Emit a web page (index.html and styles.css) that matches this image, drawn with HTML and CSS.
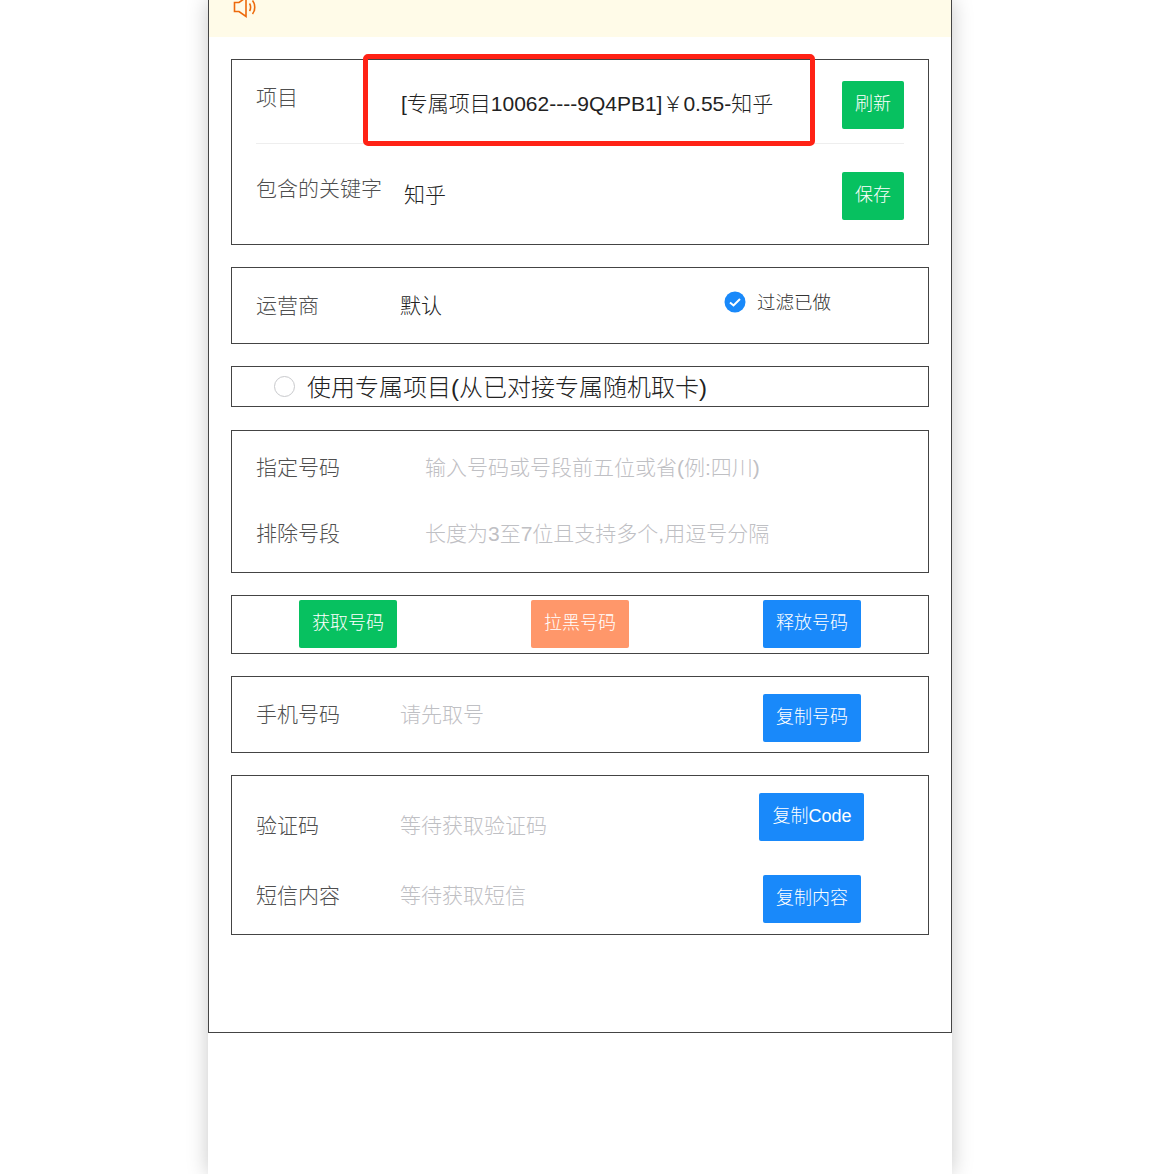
FILE: index.html
```html
<!DOCTYPE html>
<html>
<head>
	<meta charset="utf-8"/>
	<title>取号</title>
	<link rel="stylesheet" href="styles.css">
</head>
<body>
	<div id="phone">
		<div id="frame">
			<div id="notice">
				<svg class="speaker" width="24" height="24" viewBox="0 0 24 24" fill="none" stroke="#ed6a0c" stroke-width="1.6">
					<path d="M1.5 7.5H6L13 2.5V21.500L6 16.500H1.500Z"/>
					<path d="M16.500 8.500C18 10.500 18 14 16.500 16"/>
					<path d="M19.500 5.500C22.500 9 22.500 15.500 19.500 19"/>
				</svg>
			</div>

			<div class="card" id="project">
				<div class="row first">
					<span class="label">项目</span>
					<span class="value">[专属项目10062----9Q4PB1]￥0.55-知乎</span>
					<div class="button green small">刷新</div>
				</div>
				<div class="row second">
					<span class="label">包含的关键字</span>
					<span class="value keyword">知乎</span>
					<div class="button green small">保存</div>
				</div>
				<div id="mark"></div>
			</div>

			<div class="card" id="carrier">
				<span class="label">运营商</span>
				<span class="value">默认</span>
				<div class="check">
					<svg width="22" height="22" viewBox="0 0 22 22">
						<circle cx="11" cy="11" r="10.500" fill="#1989fa"/>
						<path d="M6 11.500L9.500 14.500L16 8" fill="none" stroke="#fff" stroke-width="2"/>
					</svg>
					<span>过滤已做</span>
				</div>
			</div>

			<div class="card" id="exclusive">
				<i class="radio"></i>
				<span class="title">使用专属项目(从已对接专属随机取卡)</span>
			</div>

			<div class="card" id="numbers">
				<div class="line">
					<span class="label">指定号码</span>
					<span class="hint">输入号码或号段前五位或省(例:四川)</span>
				</div>
				<div class="line">
					<span class="label">排除号段</span>
					<span class="hint">长度为3至7位且支持多个,用逗号分隔</span>
				</div>
			</div>

			<div class="card" id="actions">
				<div class="button green">获取号码</div>
				<div class="button orange">拉黑号码</div>
				<div class="button blue">释放号码</div>
			</div>

			<div class="card" id="mobile">
				<span class="label">手机号码</span>
				<span class="hint">请先取号</span>
				<div class="slot"><div class="button blue">复制号码</div></div>
			</div>

			<div class="card" id="sms">
				<div class="line code">
					<span class="label">验证码</span>
					<span class="hint">等待获取验证码</span>
					<div class="slot"><div class="button blue">复制Code</div></div>
				</div>
				<div class="line content">
					<span class="label">短信内容</span>
					<span class="hint">等待获取短信</span>
					<div class="slot"><div class="button blue">复制内容</div></div>
				</div>
			</div>
		</div>
	</div>
</body>
</html>
```

FILE: styles.css
```css
html,body{
	margin:0;
	padding:0;
	background:#fff;
}
body{
	font-family:"Liberation Sans","Noto Sans CJK SC",sans-serif;
	font-size:21px;
	font-weight:300;
	color:#222;
	overflow:hidden;
}
#phone{
	width:744px;
	height:1174px;
	margin-left:208px;
	box-shadow:0 0 20px rgba(0,0,0,0.22);
	background:#fff;
}
#frame{
	box-sizing:border-box;
	height:1033px;
	border:1px solid #444;
	border-top:none;
}
#notice{
	height:37px;
	background:#fffbe8;
	overflow:hidden;
	position:relative;
}
.speaker{
	position:absolute;
	left:24px;
	top:-5px;
}
.card{
	box-sizing:border-box;
	width:698px;
	margin:22px 0 0 22px;
	border:1px solid #444;
	position:relative;
}
.label{
	width:145px;
	flex:none;
	color:#4f4f4f;
	line-height:30px;
	white-space:nowrap;
}
.value{
	flex:1;
	line-height:30px;
	white-space:nowrap;
}
.hint{
	flex:1;
	color:#bfc0c4;
	line-height:30px;
	white-space:nowrap;
}
.button{
	box-sizing:border-box;
	height:48px;
	line-height:47px;
	padding:0 13px;
	flex:none;
	border-radius:2px;
	color:#fff;
	font-size:18px;
	white-space:nowrap;
}
.green{
	background:#07c160;
}
.orange{
	background:#ff976a;
}
.blue{
	background:#1989fa;
}
.slot{
	width:232px;
	flex:none;
	display:flex;
	justify-content:center;
	margin-right:-24px;
}

#project{
	height:186px;
	padding:0 24px;
}
.row{
	display:flex;
	align-items:flex-start;
}
.row.first{
	height:84px;
	box-sizing:border-box;
	padding-top:21px;
	border-bottom:1px solid #eee;
}
.row.first .label{
	margin-top:2px;
}
.row.first .value{
	margin-top:8px;
}
.row.second{
	height:100px;
	box-sizing:border-box;
	padding-top:28px;
}
.row.second .label{
	margin-top:2px;
}
.row.second .value{
	margin-top:8px;
}
.keyword{
	padding-left:3px;
}
#mark{
	position:absolute;
	left:131px;
	top:-6px;
	box-sizing:border-box;
	width:452px;
	height:92px;
	border:5px solid #ff2215;
	border-radius:5px;
}

#carrier{
	height:77px;
	padding:0 24px;
	display:flex;
	align-items:center;
}
#carrier .value{
	margin-left:-1px;
}
.check{
	position:absolute;
	left:492px;
	top:21px;
	display:flex;
	align-items:center;
	gap:11px;
	font-size:18.500px;
	color:#333;
}
.check svg{
	display:block;
}
.check span{
	margin-top:-1px;
}

#exclusive{
	height:41px;
	padding-left:42px;
	display:flex;
	align-items:center;
	gap:12px;
	font-size:24px;
}
.title{
	margin-top:-2px;
}
.radio{
	box-sizing:border-box;
	width:21px;
	height:21px;
	border:1px solid #c8c9cc;
	border-radius:50%;
}

#numbers{
	height:143px;
	margin-top:23px;
	padding:22px 24px 0;
}
#numbers .line{
	display:flex;
	height:66px;
}
#numbers .label{
	width:169px;
}

#actions{
	height:59px;
	padding-top:4px;
	display:flex;
	justify-content:space-around;
	align-items:flex-start;
}

#mobile{
	height:77px;
	padding:0 24px;
	display:flex;
	align-items:center;
}
#mobile .label{
	width:144px;
}
#mobile .slot{
	margin-top:6px;
}

#sms{
	height:160px;
	padding:0 24px;
}
#sms .label{
	width:144px;
}
#sms .line{
	display:flex;
	align-items:flex-start;
}
#sms .code{
	height:81px;
	padding-top:17px;
	box-sizing:border-box;
}
#sms .code .label,#sms .code .hint{
	margin-top:18px;
}
#sms .code .button{
	padding:0 12px 0 13px;
	margin-left:-1px;
}
#sms .content{
	height:70px;
	padding-top:18px;
	box-sizing:border-box;
}
#sms .content .label,#sms .content .hint{
	margin-top:6px;
}
```
